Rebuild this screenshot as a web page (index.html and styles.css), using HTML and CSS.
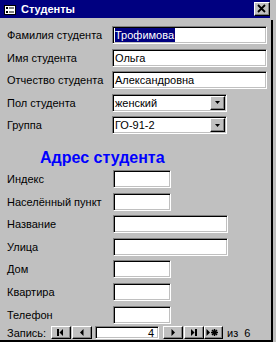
FILE: index.html
```html
<!DOCTYPE html>
<html lang="ru">
<head>
  <meta charset="UTF-8" />
  <title>Студенты</title>
  <link rel="stylesheet" href="styles.css">
</head>
<body>
  <div class="window">
    <div class="titlebar">
      <svg class="form-icon" width="12" height="10" viewBox="0 0 12 10">
        <rect x="0.5" y="0.5" width="11" height="9" fill="#fff" stroke="#000" />
        <rect x="2" y="2" width="2" height="2" fill="#000" />
        <rect x="2" y="6" width="2" height="2" fill="#000" />
        <rect x="5" y="2" width="5" height="2" fill="#808080" />
        <rect x="5" y="6" width="5" height="2" fill="#808080" />
      </svg>
      <span class="title">Студенты</span>
      <span class="close">
        <svg width="14" height="12" viewBox="0 0 14 12">
          <path d="M3 2 L10 9 M10 2 L3 9" stroke="#000" stroke-width="1.8" />
        </svg>
      </span>
    </div>

    <div class="client">
      <!-- main fields -->
      <div class="form">
        <div class="row">
          <span class="label">Фамилия студента</span>
          <div class="field w-full"><span class="sel">Трофимова</span></div>
        </div>
        <div class="row">
          <span class="label">Имя студента</span>
          <div class="field w-full">Ольга</div>
        </div>
        <div class="row">
          <span class="label">Отчество студента</span>
          <div class="field w-full">Александровна</div>
        </div>
        <div class="row">
          <span class="label">Пол студента</span>
          <div class="field w-combo">
            <span class="value">женский</span>
            <span class="drop"><svg width="5" height="3" viewBox="0 0 5 3"><path d="M0 0 H5 L2.5 3 Z" fill="#000" /></svg></span>
          </div>
        </div>
        <div class="row">
          <span class="label">Группа</span>
          <div class="field w-combo">
            <span class="value">ГО-91-2</span>
            <span class="drop"><svg width="5" height="3" viewBox="0 0 5 3"><path d="M0 0 H5 L2.5 3 Z" fill="#000" /></svg></span>
          </div>
        </div>
      </div>

      <h2 class="section">Адрес студента</h2>

      <!-- address -->
      <div class="form address">
        <div class="row"><span class="label">Индекс</span><div class="field w-small"></div></div>
        <div class="row"><span class="label">Населённый пункт</span><div class="field w-small"></div></div>
        <div class="row"><span class="label">Название</span><div class="field w-mid"></div></div>
        <div class="row"><span class="label">Улица</span><div class="field w-mid"></div></div>
        <div class="row"><span class="label">Дом</span><div class="field w-small"></div></div>
        <div class="row"><span class="label">Квартира</span><div class="field w-small"></div></div>
        <div class="row"><span class="label">Телефон</span><div class="field w-small"></div></div>
      </div>

      <!-- record navigation -->
      <div class="nav">
        <span class="nav-label">Запись:</span>
        <span class="navbtn">
          <svg width="18" height="11" viewBox="0 0 18 11"><rect x="5" y="2" width="2" height="7" fill="#000" /><path d="M11 2 V9 L7.5 5.5 Z" fill="#000" /></svg>
        </span>
        <span class="navbtn gap1">
          <svg width="18" height="11" viewBox="0 0 18 11"><path d="M10.5 2 V9 L7 5.5 Z" fill="#000" /></svg>
        </span>
        <div class="field nav-field">4</div>
        <span class="navbtn gap4">
          <svg width="18" height="11" viewBox="0 0 18 11"><path d="M7.5 2 V9 L11 5.5 Z" fill="#000" /></svg>
        </span>
        <span class="navbtn gap1">
          <svg width="18" height="11" viewBox="0 0 18 11"><path d="M6 2 V9 L9.5 5.5 Z" fill="#000" /><rect x="10" y="2" width="2" height="7" fill="#000" /></svg>
        </span>
        <span class="navbtn last">
          <svg width="17" height="11" viewBox="0 0 17 11"><path d="M1.5 2 V9 L5 5.5 Z" fill="#000" /><path d="M9.5 2 V9 M6 5.5 H13 M7 3 L12 8 M12 3 L7 8" stroke="#000" stroke-width="1.5" /></svg>
        </span>
        <span class="nav-count">из&nbsp; 6</span>
      </div>
    </div>
  </div>
</body>
</html>
```

FILE: styles.css
```css
body {
  margin: 0;
  background-color: #c0c0c0;
  font-family: "Liberation Sans", Arial, sans-serif;
  font-size: 11px;
  color: #000;
}

.window {
  width: 276px;
  height: 342px;
  display: flex;
  flex-direction: column;
  overflow: hidden;
}

.titlebar {
  height: 18px;
  width: 270px;
  flex: none;
  box-sizing: border-box;
  padding-left: 4px;
  background-color: #000080;
  color: #fff;
  display: flex;
  align-items: center;
}

.form-icon {
  flex: none;
  margin-top: 1px;
}

.title {
  margin-left: 5px;
  font-size: 11px;
  font-weight: bold;
}

.close {
  margin-left: auto;
  width: 16px;
  height: 14px;
  box-sizing: border-box;
  background-color: #c0c0c0;
  border: 1px solid;
  border-color: #fff #000 #000 #fff;
  box-shadow: inset -1px -1px #808080;
  display: flex;
}

.client {
  flex: 1;
  margin-top: 2px;
  width: 271px;
  border-right: 2px solid #000;
  border-bottom: 2px solid #000;
  display: flex;
  flex-direction: column;
}

.form {
  padding-top: 6px;
  display: flex;
  flex-direction: column;
  gap: 4.5px;
}

.row {
  height: 18px;
  display: flex;
  align-items: center;
}

.label {
  flex: none;
  width: 105px;
  padding-left: 7px;
  white-space: nowrap;
}

.address {
  padding-top: 4px;
  gap: 4.6px;
}

.address .label {
  width: 106px;
}

.field {
  height: 18px;
  box-sizing: border-box;
  padding-left: 2px;
  background-color: #fff;
  border: 1px solid;
  border-color: #808080 #fff #fff #808080;
  box-shadow: inset 1px 1px #000, inset -1px -1px #c0c0c0;
  display: flex;
  align-items: center;
  white-space: nowrap;
}

.w-full { width: 155px; }
.w-combo { width: 115px; }
.w-mid { width: 115px; }
.w-small { width: 58px; }

.sel {
  background-color: #000080;
  color: #fff;
  padding: 1px 1px 1px 0;
}

.value {
  flex: 1;
}

.drop {
  width: 15px;
  height: 14px;
  box-sizing: border-box;
  margin-right: 1px;
  background-color: #c0c0c0;
  border: 1px solid;
  border-color: #fff #000 #000 #fff;
  box-shadow: inset -1px -1px #808080;
  display: flex;
  align-items: center;
  justify-content: center;
}

.section {
  margin: 15px 0 0 40px;
  height: 17px;
  font-size: 16px;
  line-height: 17px;
  font-weight: bold;
  color: #0000ff;
}

.nav {
  margin-top: auto;
  margin-bottom: 1px;
  height: 13px;
  display: flex;
  align-items: center;
}

.nav-label {
  width: 44px;
  padding-left: 7px;
  flex: none;
}

.navbtn {
  width: 20px;
  height: 13px;
  flex: none;
  box-sizing: border-box;
  border: 1px solid;
  border-color: #fff #000 #000 #fff;
  box-shadow: inset -1px -1px #808080;
  display: flex;
}

.navbtn.gap1 { margin-left: 1px; }
.navbtn.gap4 { margin-left: 4px; }
.navbtn.last { width: 19px; }

.nav-field {
  width: 64px;
  height: 13px;
  margin-left: 3px;
  padding-right: 4px;
  justify-content: flex-end;
}

.nav-count {
  margin-left: 4px;
}
```
